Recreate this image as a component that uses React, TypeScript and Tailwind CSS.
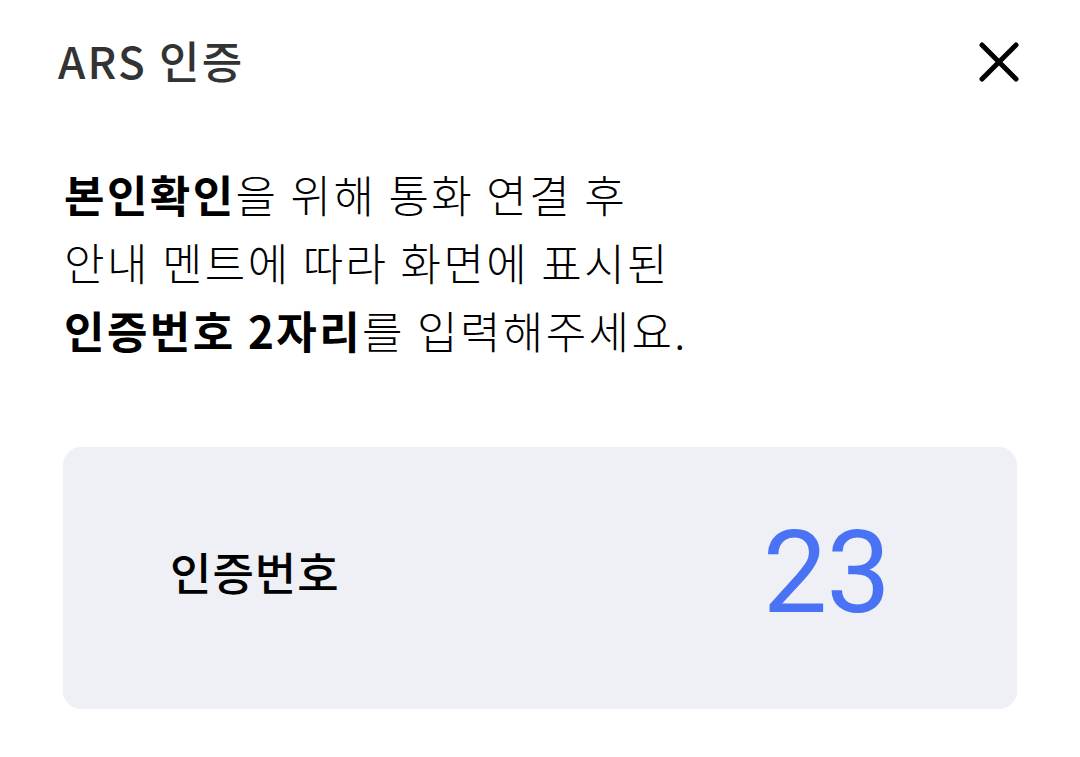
const kr = { fontFamily: '"Noto Sans CJK KR", "Noto Sans", sans-serif' };

export default function App() {
  return (
    <div className="w-[1080px] h-[757px] bg-white relative" style={kr}>
      <div className="flex items-center justify-between pl-[58px] pr-[61px] pt-[28px]">
        <h1 className="text-[44px] leading-[64px] font-medium text-[#333333] tracking-[2.2px]">ARS 인증</h1>
        <svg width="40" height="40" viewBox="0 0 40 40" className="text-black mt-[4px]">
          <path d="M3 3 L37 37 M37 3 L3 37" stroke="currentColor" strokeWidth="5" strokeLinecap="round" fill="none" />
        </svg>
      </div>

      <p className="pl-[64px] pt-[68px] text-[44px] leading-[68px] text-black font-light tracking-[2.4px]">
        <b className="font-bold">본인확인</b>을 위해 통화 연결 후
        <br />
        안내 멘트에 따라 화면에 표시된
        <br />
        <b className="font-bold">인증번호 2자리</b>를 입력해주세요.
      </p>

      <div className="mx-[63px] mt-[83px] h-[262px] rounded-[18px] bg-[#eef0f5] flex items-center justify-between pl-[107px] pr-[127px]">
        <span className="text-[45px] font-medium text-black tracking-[1px] mb-[12px]">인증번호</span>
        <span className="text-[115px] leading-none text-[#4a72f5] font-normal tracking-[-1px] mb-[12px]" style={{ fontFamily: 'Roboto, sans-serif' }}>23</span>
      </div>
    </div>
  );
}
